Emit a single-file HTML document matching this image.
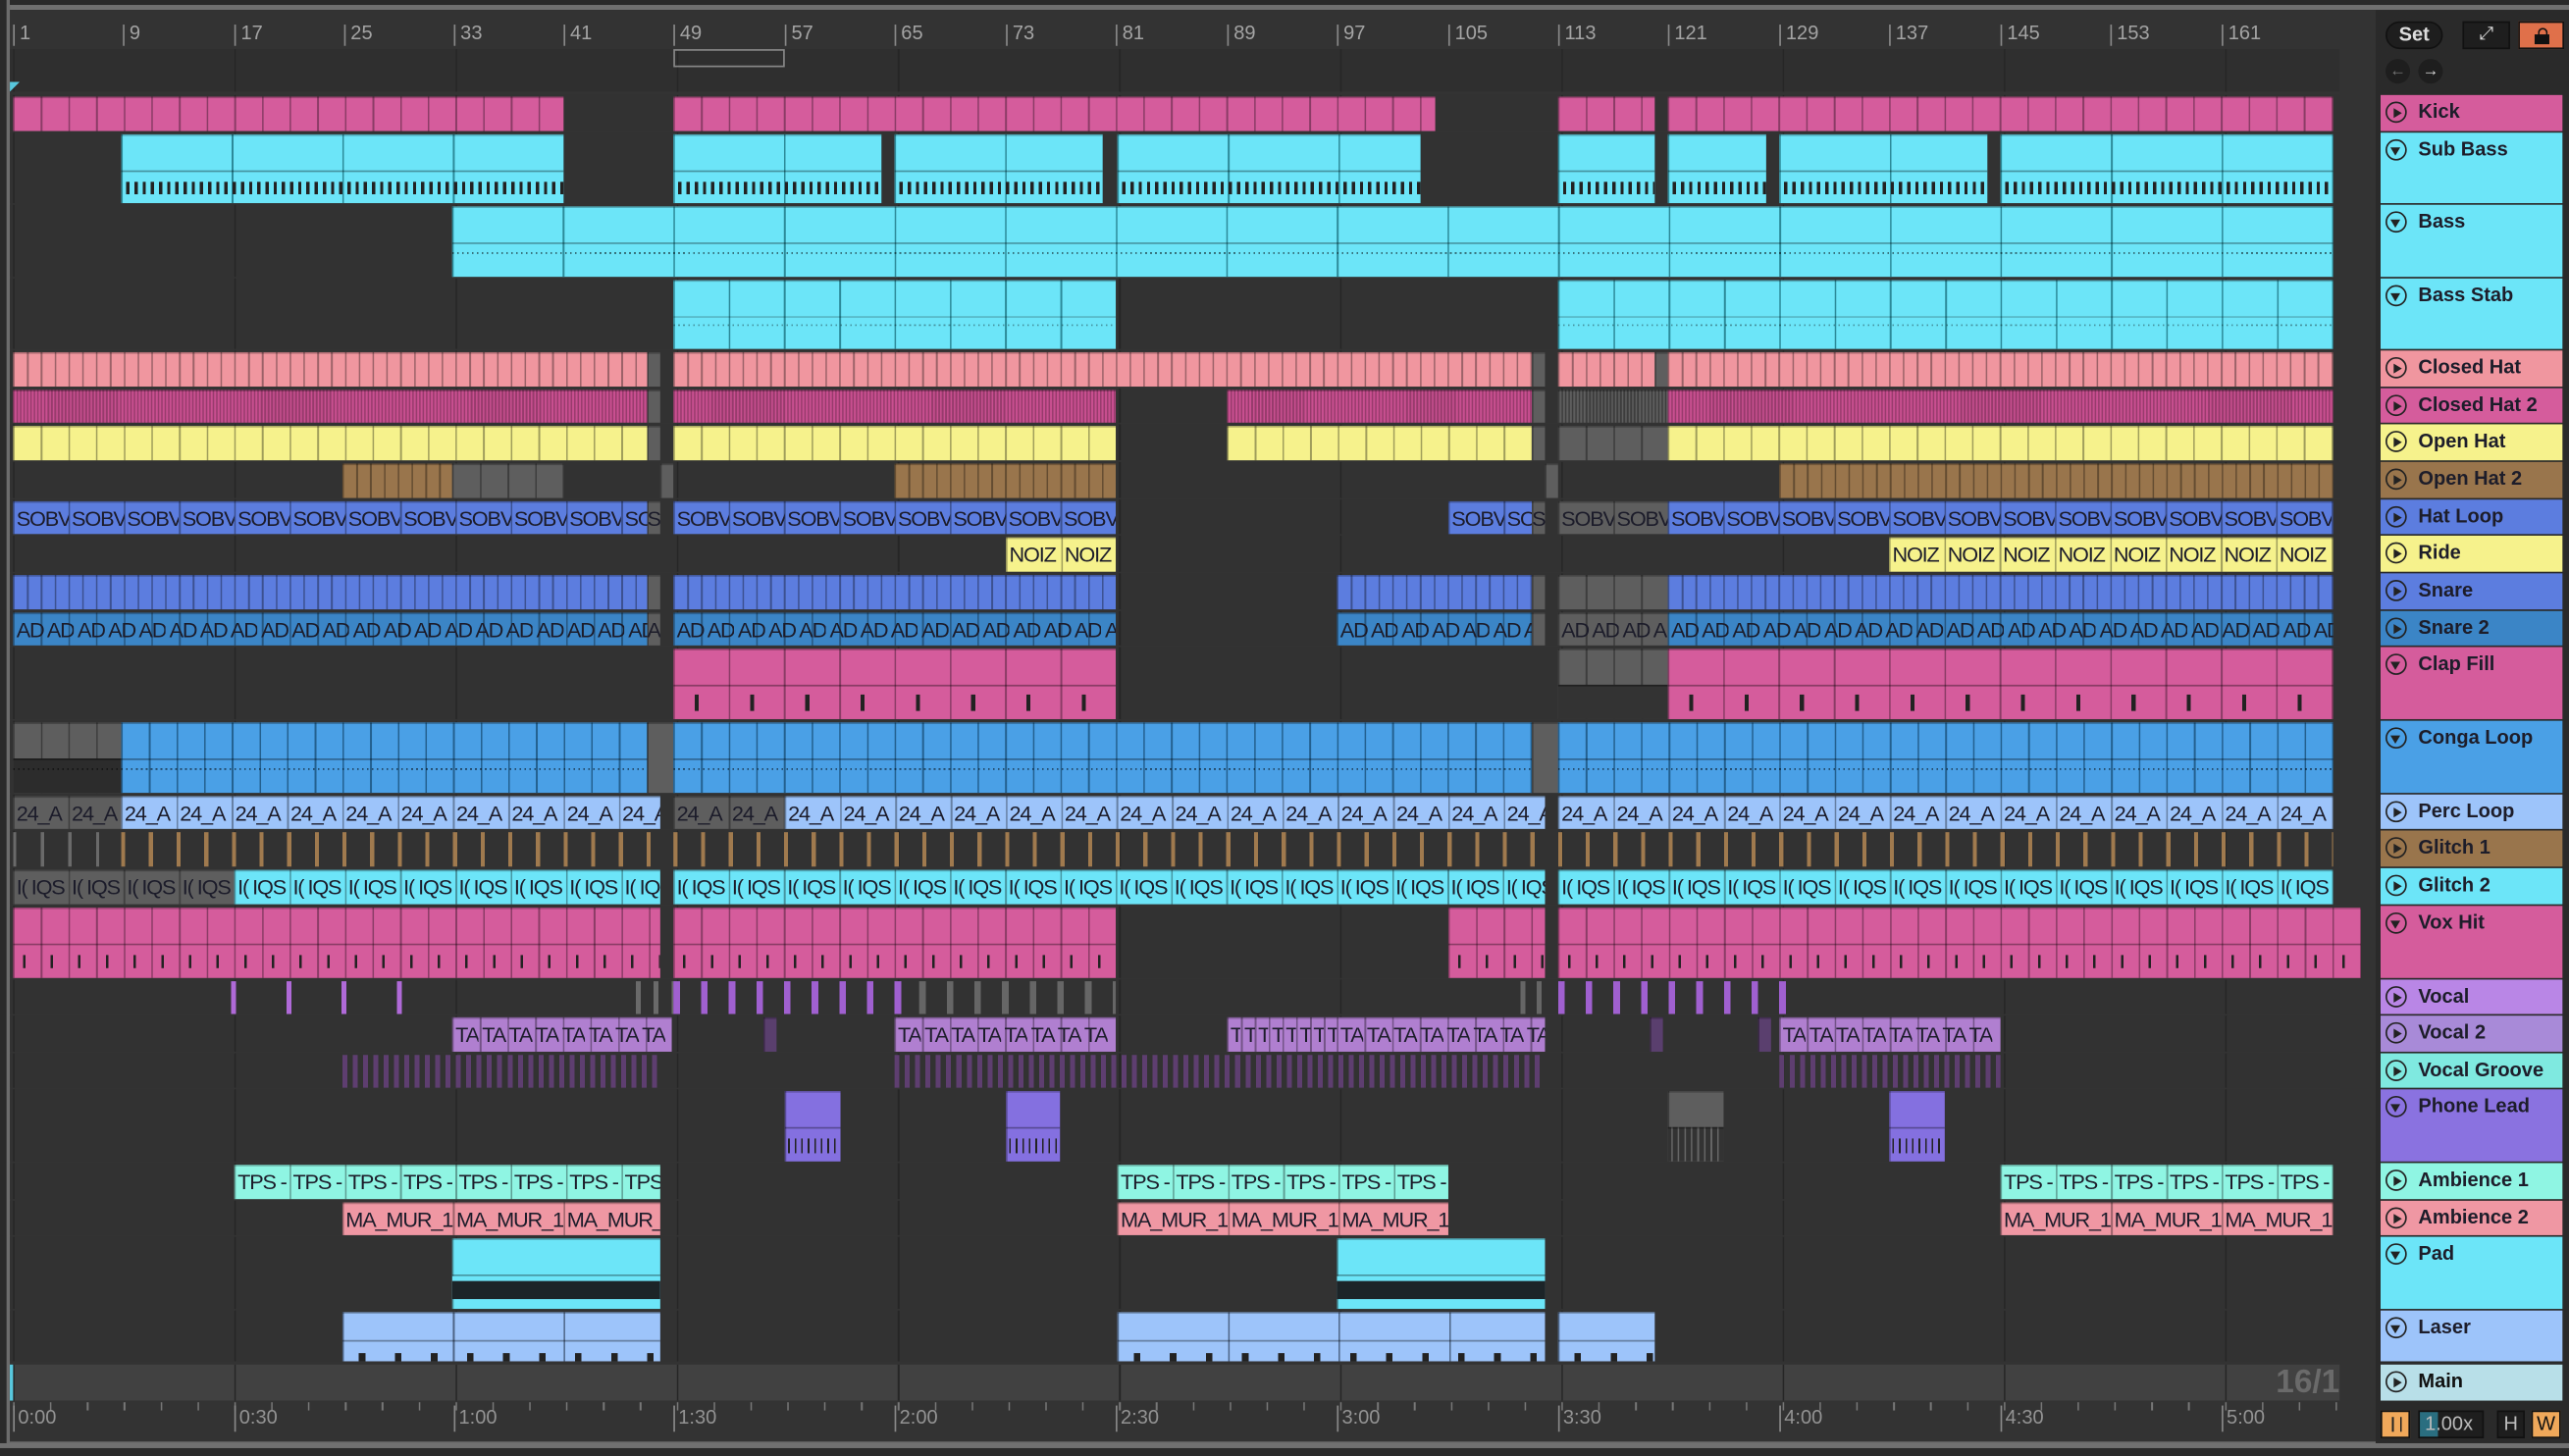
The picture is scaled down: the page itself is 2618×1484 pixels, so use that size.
<!DOCTYPE html>
<html><head><meta charset="utf-8"><style>
*{margin:0;padding:0;box-sizing:border-box}
html,body{width:2618px;height:1484px;overflow:hidden;background:#2a2a2a}
#w{position:absolute;left:0;top:0;width:1568px;height:889px;transform:scale(1.66965);transform-origin:0 0;font-family:"Liberation Sans",sans-serif}
.abs{position:absolute}
.r{position:absolute;left:0;width:1428px;background:#323232;background-image:repeating-linear-gradient(90deg,#262626 0 1px,transparent 1px 135px);background-position:8px 0}
.c{position:absolute;top:1px;bottom:0;background:repeating-linear-gradient(90deg,var(--d,rgba(0,0,0,.35)) 0 1px,transparent 1px var(--s,16.875px)),var(--c);border-top:1px solid rgba(0,0,0,.25);overflow:hidden}
.g{--c:#5e5e5e}
.t{white-space:nowrap;font-size:13px;line-height:20px;color:#1c1c2a;letter-spacing:-.7px}
.t i{display:inline-block;width:var(--s);padding-left:2px;overflow:hidden;font-style:normal;vertical-align:top}
.t i.n{width:9px}.t i.w{width:24.75px}
.lo{position:absolute;left:0;right:0;top:50%;bottom:0;border-top:1px solid rgba(0,0,0,.35)}
.mk{background:repeating-linear-gradient(90deg,transparent 0 3px,#222 3px 5px,transparent 5px var(--s));background-size:100% 40%;background-repeat:repeat-x;background-position:0 55%}
.dots{background:repeating-linear-gradient(90deg,rgba(0,0,0,.6) 0 1px,transparent 1px 3px);background-size:100% 1px;background-repeat:repeat-x;background-position:0 25%}
.h{position:absolute;left:1453px;width:111px;font-weight:bold;font-size:12px;color:#1d1d2a;padding-left:23px;line-height:20px}
.h:before{content:"";position:absolute;left:3px;top:4px;width:11px;height:11px;border:1.3px solid #222;border-radius:50%}
.h:after{content:"";position:absolute;left:8px;top:7.5px;border-left:5px solid #222;border-top:3.5px solid transparent;border-bottom:3.5px solid transparent}
.h.v:after{left:6px;top:9px;border-top:5px solid #222;border-left:3.5px solid transparent;border-right:3.5px solid transparent;border-bottom:0}
.rl{position:absolute;top:15px;font-size:12px;color:#a4a4a4;border-left:1px solid #888;padding-left:3px;height:13px;line-height:11px}
.tl{position:absolute;top:858px;font-size:12px;color:#939393;border-left:1px solid #888;padding-left:2px;line-height:14px;height:16px}
</style></head><body><div id="w">
<div class="abs" style="left:0;top:3px;width:1568px;height:3px;background:#707070"></div>
<div class="abs" style="left:4px;top:6px;width:1446px;height:876px;border-left:2px solid #6c6c6c;border-bottom:2px solid #6c6c6c;background:#333"></div>
<div class="abs" style="left:6px;top:30px;width:1422px;height:26px;background:#2f2f2f;background-image:repeating-linear-gradient(90deg,#262626 0 1px,transparent 1px 135px);background-position:2px 0"></div>
<div class="abs" style="left:6px;top:50px;border-left:6px solid #58c8de;border-bottom:6px solid transparent"></div>
<div class="abs" style="left:411px;top:30px;width:68px;height:11px;border:1px solid #888"></div>
<div class="rl" style="left:8px">1</div><div class="rl" style="left:75px">9</div><div class="rl" style="left:143px">17</div><div class="rl" style="left:210px">25</div><div class="rl" style="left:277px">33</div><div class="rl" style="left:344px">41</div><div class="rl" style="left:411px">49</div><div class="rl" style="left:479px">57</div><div class="rl" style="left:546px">65</div><div class="rl" style="left:614px">73</div><div class="rl" style="left:681px">81</div><div class="rl" style="left:749px">89</div><div class="rl" style="left:816px">97</div><div class="rl" style="left:884px">105</div><div class="rl" style="left:951px">113</div><div class="rl" style="left:1018px">121</div><div class="rl" style="left:1086px">129</div><div class="rl" style="left:1153px">137</div><div class="rl" style="left:1221px">145</div><div class="rl" style="left:1288px">153</div><div class="rl" style="left:1356px">161</div>
<div class="abs" style="left:1456px;top:13px;width:35px;height:17px;border-radius:9px;background:#1e1e1e;border:1px solid #111;color:#ddd;font-size:12px;text-align:center;line-height:15px;font-weight:bold">Set</div>
<div class="abs" style="left:1503px;top:13px;width:29px;height:17px;background:#1e1e1e;border:1px solid #111;color:#ddd;font-size:11px;text-align:center;line-height:15px">⤢</div>
<div class="abs" style="left:1537px;top:13px;width:28px;height:17px;background:#e0704a;border:1px solid #111;text-align:center"><div class="abs" style="left:9px;top:7px;width:9px;height:6px;background:#111"></div><div class="abs" style="left:10.5px;top:3px;width:6px;height:6px;border:1.5px solid #111;border-bottom:0;border-radius:3px 3px 0 0"></div></div>
<div class="abs" style="left:1456px;top:36px;width:15px;height:15px;border-radius:50%;background:#1e1e1e;color:#777;font-size:10px;text-align:center;line-height:15px">←</div>
<div class="abs" style="left:1476px;top:36px;width:15px;height:15px;border-radius:50%;background:#1e1e1e;color:#ddd;font-size:10px;text-align:center;line-height:15px">→</div>

<div class="r" style="top:58px;height:22px"><div class="c" style="--c:#d55c9c;left:8px;width:336px"></div><div class="c" style="--c:#d55c9c;left:411px;width:465px"></div><div class="c" style="--c:#d55c9c;left:951px;width:59px"></div><div class="c" style="--c:#d55c9c;left:1018px;width:406px"></div></div>
<div class="r" style="top:81px;height:43px">
<div class="c" style="--c:#6ce5f8;--s:67.5px;--d:#2c8a99;left:74px;width:270px"><div class="lo mk" style="--s:5px"></div></div>
<div class="c" style="--c:#6ce5f8;--s:67.5px;--d:#2c8a99;left:411px;width:127px"><div class="lo mk" style="--s:5px"></div></div>
<div class="c" style="--c:#6ce5f8;--s:67.5px;--d:#2c8a99;left:546px;width:127px"><div class="lo mk" style="--s:5px"></div></div>
<div class="c" style="--c:#6ce5f8;--s:67.5px;--d:#2c8a99;left:682px;width:185px"><div class="lo mk" style="--s:5px"></div></div>
<div class="c" style="--c:#6ce5f8;--s:67.5px;--d:#2c8a99;left:951px;width:59px"><div class="lo mk" style="--s:5px"></div></div>
<div class="c" style="--c:#6ce5f8;--s:67.5px;--d:#2c8a99;left:1018px;width:60px"><div class="lo mk" style="--s:5px"></div></div>
<div class="c" style="--c:#6ce5f8;--s:67.5px;--d:#2c8a99;left:1086px;width:127px"><div class="lo mk" style="--s:5px"></div></div>
<div class="c" style="--c:#6ce5f8;--s:67.5px;--d:#2c8a99;left:1221px;width:203px"><div class="lo mk" style="--s:5px"></div></div></div>
<div class="r" style="top:125px;height:44px"><div class="c" style="--c:#6ce5f8;--s:67.5px;--d:#2c8a99;left:276px;width:1148px"><div class="lo dots"></div></div></div>
<div class="r" style="top:170px;height:43px"><div class="c" style="--c:#6ce5f8;--s:33.75px;--d:#2c8a99;left:411px;width:270px"><div class="lo dots" style="opacity:.6"></div></div><div class="c" style="--c:#6ce5f8;--s:33.75px;--d:#2c8a99;left:951px;width:473px"><div class="lo dots" style="opacity:.6"></div></div></div>
<div class="r" style="top:214px;height:22px"><div class="c" style="--c:#f0969f;--s:8.4375px;left:8px;width:387px"></div><div class="c g" style="left:395px;width:8px"></div><div class="c" style="--c:#f0969f;--s:8.4375px;left:411px;width:524px"></div><div class="c g" style="left:935px;width:8px"></div><div class="c" style="--c:#f0969f;--s:8.4375px;left:951px;width:59px"></div><div class="c g" style="left:1010px;width:8px"></div><div class="c" style="--c:#f0969f;--s:8.4375px;left:1018px;width:406px"></div></div>
<div class="r" style="top:237px;height:21px"><div class="c" style="--c:#c94f90;--s:2.1px;--d:rgba(0,0,0,.25);left:8px;width:387px"></div><div class="c g" style="left:395px;width:8px"></div><div class="c" style="--c:#c94f90;--s:2.1px;--d:rgba(0,0,0,.25);left:411px;width:270px"></div><div class="c" style="--c:#c94f90;--s:2.1px;--d:rgba(0,0,0,.25);left:749px;width:186px"></div><div class="c g" style="left:935px;width:8px"></div><div class="c g" style="--s:2.1px;left:951px;width:67px"></div><div class="c" style="--c:#c94f90;--s:2.1px;--d:rgba(0,0,0,.25);left:1018px;width:406px"></div></div>
<div class="r" style="top:259px;height:22px"><div class="c" style="--c:#f6f28c;left:8px;width:387px"></div><div class="c g" style="left:395px;width:8px"></div><div class="c" style="--c:#f6f28c;left:411px;width:270px"></div><div class="c" style="--c:#f6f28c;left:749px;width:186px"></div><div class="c g" style="left:935px;width:8px"></div><div class="c g" style="left:951px;width:67px"></div><div class="c" style="--c:#f6f28c;left:1018px;width:406px"></div></div>
<div class="r" style="top:282px;height:22px"><div class="c" style="--c:#99754c;--s:8.4375px;left:209px;width:67px"></div><div class="c g" style="left:276px;width:68px"></div><div class="c g" style="left:403px;width:8px"></div><div class="c" style="--c:#99754c;--s:8.4375px;left:546px;width:135px"></div><div class="c g" style="left:943px;width:8px"></div><div class="c" style="--c:#99754c;--s:8.4375px;left:1086px;width:338px"></div></div>
<div class="r" style="top:305px;height:21px">
<div class="c t" style="--c:#5c7ddf;--s:33.75px;left:8px;width:387px"><i>SOBV</i><i>SOBV</i><i>SOBV</i><i>SOBV</i><i>SOBV</i><i>SOBV</i><i>SOBV</i><i>SOBV</i><i>SOBV</i><i>SOBV</i><i>SOBV</i><i>SOBV</i></div><div class="c g t" style="left:395px;width:8px">S</div>
<div class="c t" style="--c:#5c7ddf;--s:33.75px;left:411px;width:270px"><i>SOBV</i><i>SOBV</i><i>SOBV</i><i>SOBV</i><i>SOBV</i><i>SOBV</i><i>SOBV</i><i>SOBV</i></div>
<div class="c t" style="--c:#5c7ddf;--s:33.75px;left:884px;width:51px"><i>SOBV</i><i>SOBV</i></div><div class="c g t" style="left:935px;width:8px">S</div>
<div class="c g t" style="--s:33.75px;left:951px;width:67px"><i>SOBV</i><i>SOBV</i></div>
<div class="c t" style="--c:#5c7ddf;--s:33.75px;left:1018px;width:406px"><i>SOBV</i><i>SOBV</i><i>SOBV</i><i>SOBV</i><i>SOBV</i><i>SOBV</i><i>SOBV</i><i>SOBV</i><i>SOBV</i><i>SOBV</i><i>SOBV</i><i>SOBV</i></div></div>
<div class="r" style="top:327px;height:22px"><div class="c t" style="--c:#f6f28c;--s:33.75px;left:614px;width:67px"><i>NOIZ</i><i>NOIZ</i></div><div class="c t" style="--c:#f6f28c;--s:33.75px;left:1153px;width:271px"><i>NOIZ</i><i>NOIZ</i><i>NOIZ</i><i>NOIZ</i><i>NOIZ</i><i>NOIZ</i><i>NOIZ</i><i>NOIZ</i></div></div>
<div class="r" style="top:350px;height:22px"><div class="c" style="--c:#5c7ddf;--s:8.4375px;left:8px;width:387px"></div><div class="c g" style="left:395px;width:8px"></div><div class="c" style="--c:#5c7ddf;--s:8.4375px;left:411px;width:270px"></div><div class="c" style="--c:#5c7ddf;--s:8.4375px;left:816px;width:119px"></div><div class="c g" style="left:935px;width:8px"></div><div class="c g" style="left:951px;width:67px"></div><div class="c" style="--c:#5c7ddf;--s:8.4375px;left:1018px;width:406px"></div></div>
<div class="r" style="top:373px;height:21px">
<div class="c t" style="--c:#3b85c6;left:8px;width:387px"><i>AD</i><i>AD</i><i>AD</i><i>AD</i><i>AD</i><i>AD</i><i>AD</i><i>AD</i><i>AD</i><i>AD</i><i>AD</i><i>AD</i><i>AD</i><i>AD</i><i>AD</i><i>AD</i><i>AD</i><i>AD</i><i>AD</i><i>AD</i><i>AD</i><i>AD</i><i>AD</i></div><div class="c g t" style="left:395px;width:8px">A</div>
<div class="c t" style="--c:#3b85c6;left:411px;width:270px"><i>AD</i><i>AD</i><i>AD</i><i>AD</i><i>AD</i><i>AD</i><i>AD</i><i>AD</i><i>AD</i><i>AD</i><i>AD</i><i>AD</i><i>AD</i><i>AD</i><i>AD</i><i>AD</i></div>
<div class="c t" style="--c:#3b85c6;left:816px;width:119px"><i>AD</i><i>AD</i><i>AD</i><i>AD</i><i>AD</i><i>AD</i><i>AD</i></div><div class="c g" style="left:935px;width:8px"></div>
<div class="c g t" style="left:951px;width:67px"><i>AD</i><i>AD</i><i>AD</i><i>AD</i></div>
<div class="c t" style="--c:#3b85c6;left:1018px;width:406px"><i>AD</i><i>AD</i><i>AD</i><i>AD</i><i>AD</i><i>AD</i><i>AD</i><i>AD</i><i>AD</i><i>AD</i><i>AD</i><i>AD</i><i>AD</i><i>AD</i><i>AD</i><i>AD</i><i>AD</i><i>AD</i><i>AD</i><i>AD</i><i>AD</i><i>AD</i><i>AD</i><i>AD</i></div></div>
<div class="r" style="top:395px;height:44px"><div class="c" style="--c:#d55c9c;--s:33.75px;left:411px;width:270px"><div class="lo" style="background:repeating-linear-gradient(90deg,transparent 0 13px,#222 13px 15.5px,transparent 15.5px 33.75px);background-size:100% 50%;background-repeat:repeat-x;background-position:0 50%"></div></div>
<div class="c g" style="left:951px;width:67px"><div class="lo" style="background:#333"></div></div>
<div class="c" style="--c:#d55c9c;--s:33.75px;left:1018px;width:406px"><div class="lo" style="background:repeating-linear-gradient(90deg,transparent 0 13px,#222 13px 15.5px,transparent 15.5px 33.75px);background-size:100% 50%;background-repeat:repeat-x;background-position:0 50%"></div></div></div>
<div class="r" style="top:440px;height:44px"><div class="c g" style="left:8px;width:66px"><div class="lo dots" style="background-color:#2c2c2c"></div></div>
<div class="c" style="--c:#4aa0e6;--d:#23608f;left:74px;width:321px"><div class="lo dots"></div></div><div class="c g" style="left:395px;width:16px"></div>
<div class="c" style="--c:#4aa0e6;--d:#23608f;left:411px;width:524px"><div class="lo dots"></div></div><div class="c g" style="left:935px;width:16px"></div>
<div class="c" style="--c:#4aa0e6;--d:#23608f;left:951px;width:473px"><div class="lo dots"></div></div></div>
<div class="r" style="top:485px;height:21px">
<div class="c g t" style="left:8px;width:66px;--s:33.75px"><i>24_A</i><i>24_A</i></div>
<div class="c t" style="--c:#9dc4fa;--s:33.75px;left:74px;width:329px"><i>24_A</i><i>24_A</i><i>24_A</i><i>24_A</i><i>24_A</i><i>24_A</i><i>24_A</i><i>24_A</i><i>24_A</i><i>24_A</i></div>
<div class="c g t" style="--s:33.75px;left:411px;width:68px"><i>24_A</i><i>24_A</i></div>
<div class="c t" style="--c:#9dc4fa;--s:33.75px;left:479px;width:464px"><i>24_A</i><i>24_A</i><i>24_A</i><i>24_A</i><i>24_A</i><i>24_A</i><i>24_A</i><i>24_A</i><i>24_A</i><i>24_A</i><i>24_A</i><i>24_A</i><i>24_A</i><i>24_A</i></div>
<div class="c t" style="--c:#9dc4fa;--s:33.75px;left:951px;width:473px"><i>24_A</i><i>24_A</i><i>24_A</i><i>24_A</i><i>24_A</i><i>24_A</i><i>24_A</i><i>24_A</i><i>24_A</i><i>24_A</i><i>24_A</i><i>24_A</i><i>24_A</i><i>24_A</i></div></div>
<div class="r" style="top:507px;height:22px"><div class="c" style="border:0;background:repeating-linear-gradient(90deg,#6a6a6a 0 2px,transparent 2px 16.875px);left:8px;width:66px"></div><div class="c" style="border:0;background:repeating-linear-gradient(90deg,#a07a4e 0 2.5px,transparent 2.5px 16.875px);left:74px;width:329px"></div><div class="c" style="border:0;background:repeating-linear-gradient(90deg,#a07a4e 0 2.5px,transparent 2.5px 16.875px);left:411px;width:532px"></div><div class="c" style="border:0;background:repeating-linear-gradient(90deg,#a07a4e 0 2.5px,transparent 2.5px 16.875px);left:951px;width:473px"></div></div>
<div class="r" style="top:530px;height:22px">
<div class="c g t" style="--s:33.75px;--d:rgba(0,0,0,.3);left:8px;width:135px"><i class="n">I(</i><i class="w">IQS</i><i class="n">I(</i><i class="w">IQS</i><i class="n">I(</i><i class="w">IQS</i><i class="n">I(</i><i class="w">IQS</i></div>
<div class="c t" style="--c:#6ce5f8;--s:33.75px;left:143px;width:260px"><i class="n">I(</i><i class="w">IQS</i><i class="n">I(</i><i class="w">IQS</i><i class="n">I(</i><i class="w">IQS</i><i class="n">I(</i><i class="w">IQS</i><i class="n">I(</i><i class="w">IQS</i><i class="n">I(</i><i class="w">IQS</i><i class="n">I(</i><i class="w">IQS</i><i class="n">I(</i><i class="w">IQS</i></div>
<div class="c t" style="--c:#6ce5f8;--s:33.75px;left:411px;width:532px"><i class="n">I(</i><i class="w">IQS</i><i class="n">I(</i><i class="w">IQS</i><i class="n">I(</i><i class="w">IQS</i><i class="n">I(</i><i class="w">IQS</i><i class="n">I(</i><i class="w">IQS</i><i class="n">I(</i><i class="w">IQS</i><i class="n">I(</i><i class="w">IQS</i><i class="n">I(</i><i class="w">IQS</i><i class="n">I(</i><i class="w">IQS</i><i class="n">I(</i><i class="w">IQS</i><i class="n">I(</i><i class="w">IQS</i><i class="n">I(</i><i class="w">IQS</i><i class="n">I(</i><i class="w">IQS</i><i class="n">I(</i><i class="w">IQS</i><i class="n">I(</i><i class="w">IQS</i><i class="n">I(</i><i class="w">IQS</i></div>
<div class="c t" style="--c:#6ce5f8;--s:33.75px;left:951px;width:473px"><i class="n">I(</i><i class="w">IQS</i><i class="n">I(</i><i class="w">IQS</i><i class="n">I(</i><i class="w">IQS</i><i class="n">I(</i><i class="w">IQS</i><i class="n">I(</i><i class="w">IQS</i><i class="n">I(</i><i class="w">IQS</i><i class="n">I(</i><i class="w">IQS</i><i class="n">I(</i><i class="w">IQS</i><i class="n">I(</i><i class="w">IQS</i><i class="n">I(</i><i class="w">IQS</i><i class="n">I(</i><i class="w">IQS</i><i class="n">I(</i><i class="w">IQS</i><i class="n">I(</i><i class="w">IQS</i><i class="n">I(</i><i class="w">IQS</i></div></div>
<div class="r" style="top:553px;height:44px">
<div class="c" style="--c:#d55c9c;left:8px;width:395px"><div class="lo" style="background:repeating-linear-gradient(90deg,transparent 0 6px,#222 6px 7.5px,transparent 7.5px 16.875px);background-size:100% 40%;background-repeat:repeat-x;background-position:0 50%"></div></div>
<div class="c" style="--c:#d55c9c;left:411px;width:270px"><div class="lo" style="background:repeating-linear-gradient(90deg,transparent 0 6px,#222 6px 7.5px,transparent 7.5px 16.875px);background-size:100% 40%;background-repeat:repeat-x;background-position:0 50%"></div></div>
<div class="c" style="--c:#d55c9c;left:884px;width:59px"><div class="lo" style="background:repeating-linear-gradient(90deg,transparent 0 6px,#222 6px 7.5px,transparent 7.5px 16.875px);background-size:100% 40%;background-repeat:repeat-x;background-position:0 50%"></div></div>
<div class="c" style="--c:#d55c9c;left:951px;width:490px"><div class="lo" style="background:repeating-linear-gradient(90deg,transparent 0 6px,#222 6px 7.5px,transparent 7.5px 16.875px);background-size:100% 40%;background-repeat:repeat-x;background-position:0 50%"></div></div></div>
<div class="r" style="top:598px;height:21px"><div class="c" style="border:0;background:repeating-linear-gradient(90deg,#b06ad8 0 3px,transparent 3px 33.75px);left:141px;width:130px"></div><div class="c" style="border:0;background:repeating-linear-gradient(90deg,#6a6a6a 0 3px,transparent 3px 11px);left:388px;width:23px"></div><div class="c" style="border:0;background:repeating-linear-gradient(90deg,#a060d0 0 4px,transparent 4px 16.875px);left:411px;width:150px"></div><div class="c" style="border:0;background:repeating-linear-gradient(90deg,#666 0 4px,transparent 4px 16.875px);left:561px;width:120px"></div><div class="c" style="border:0;background:repeating-linear-gradient(90deg,#666 0 3px,transparent 3px 10px);left:928px;width:20px"></div><div class="c" style="border:0;background:repeating-linear-gradient(90deg,#a060d0 0 4px,transparent 4px 16.875px);left:951px;width:140px"></div></div>
<div class="r" style="top:620px;height:22px">
<div class="c t" style="--c:#b07fd0;left:276px;width:134px"><i>TA</i><i>TA</i><i>TA</i><i>TA</i><i>TA</i><i>TA</i><i>TA</i><i>TA</i></div>
<div class="c" style="--c:#5a3f6e;left:466px;width:8px"></div>
<div class="c t" style="--c:#b07fd0;left:546px;width:135px"><i>TA</i><i>TA</i><i>TA</i><i>TA</i><i>TA</i><i>TA</i><i>TA</i><i>TA</i></div>
<div class="c t" style="--c:#b07fd0;--s:8.4375px;left:749px;width:67px"><i>T</i><i>T</i><i>T</i><i>T</i><i>T</i><i>T</i><i>T</i><i>T</i></div>
<div class="c t" style="--c:#b07fd0;left:816px;width:127px"><i>TA</i><i>TA</i><i>TA</i><i>TA</i><i>TA</i><i>TA</i><i>TA</i><i>TA</i></div>
<div class="c" style="--c:#5a3f6e;left:1007px;width:8px"></div><div class="c" style="--c:#5a3f6e;left:1073px;width:8px"></div>
<div class="c t" style="--c:#b07fd0;left:1086px;width:135px"><i>TA</i><i>TA</i><i>TA</i><i>TA</i><i>TA</i><i>TA</i><i>TA</i><i>TA</i></div></div>
<div class="r" style="top:643px;height:21px"><div class="c" style="border:0;background:repeating-linear-gradient(90deg,#5e3e70 0 3px,transparent 3px 6.3px);left:209px;width:194px"></div><div class="c" style="border:0;background:repeating-linear-gradient(90deg,#5e3e70 0 3px,transparent 3px 6.3px);left:546px;width:397px"></div><div class="c" style="border:0;background:repeating-linear-gradient(90deg,#5e3e70 0 3px,transparent 3px 6.3px);left:1086px;width:135px"></div></div>
<div class="r" style="top:665px;height:44px"><div class="c" style="--c:#8470e0;--s:40px;left:479px;width:34px"><div class="lo" style="background:repeating-linear-gradient(90deg,transparent 0 2px,#222 2px 3px,transparent 3px 4px);background-size:100% 45%;background-repeat:repeat-x;background-position:0 50%"></div></div><div class="c" style="--c:#8470e0;--s:40px;left:614px;width:33px"><div class="lo" style="background:repeating-linear-gradient(90deg,transparent 0 2px,#222 2px 3px,transparent 3px 4px);background-size:100% 45%;background-repeat:repeat-x;background-position:0 50%"></div></div><div class="c g" style="--s:40px;left:1018px;width:34px"><div class="lo" style="background:#333 repeating-linear-gradient(90deg,transparent 0 2px,#666 2px 3px,transparent 3px 4px);"></div></div><div class="c" style="--c:#8470e0;--s:40px;left:1153px;width:34px"><div class="lo" style="background:repeating-linear-gradient(90deg,transparent 0 2px,#222 2px 3px,transparent 3px 4px);background-size:100% 45%;background-repeat:repeat-x;background-position:0 50%"></div></div></div>
<div class="r" style="top:710px;height:22px">
<div class="c t" style="--c:#8ff5e3;--s:33.75px;left:143px;width:260px"><i>TPS -</i><i>TPS -</i><i>TPS -</i><i>TPS -</i><i>TPS -</i><i>TPS -</i><i>TPS -</i><i>TPS -</i></div>
<div class="c t" style="--c:#8ff5e3;--s:33.75px;left:682px;width:202px"><i>TPS -</i><i>TPS -</i><i>TPS -</i><i>TPS -</i><i>TPS -</i><i>TPS -</i></div>
<div class="c t" style="--c:#8ff5e3;--s:33.75px;left:1221px;width:203px"><i>TPS -</i><i>TPS -</i><i>TPS -</i><i>TPS -</i><i>TPS -</i><i>TPS -</i></div></div>
<div class="r" style="top:733px;height:21px">
<div class="c t" style="--c:#ef97a3;--s:67.5px;left:209px;width:194px"><i>MA_MUR_1</i><i>MA_MUR_1</i><i>MA_MUR_1</i></div>
<div class="c t" style="--c:#ef97a3;--s:67.5px;left:682px;width:202px"><i>MA_MUR_1</i><i>MA_MUR_1</i><i>MA_MUR_1</i></div>
<div class="c t" style="--c:#ef97a3;--s:67.5px;left:1221px;width:203px"><i>MA_MUR_1</i><i>MA_MUR_1</i><i>MA_MUR_1</i></div></div>
<div class="r" style="top:755px;height:44px"><div class="c" style="--c:#6ce5f8;--s:200px;left:276px;width:127px"><div class="lo" style="background:linear-gradient(#6ce5f8 0 3px,#1c2428 3px 14px,transparent 14px)"></div></div><div class="c" style="--c:#6ce5f8;--s:200px;left:816px;width:127px"><div class="lo" style="background:linear-gradient(#6ce5f8 0 3px,#1c2428 3px 14px,transparent 14px)"></div></div></div>
<div class="r" style="top:800px;height:31px"><div class="c" style="--c:#9dc4fa;--s:67.5px;--d:#4d6485;left:209px;width:194px"><div class="lo" style="top:55%;background:repeating-linear-gradient(90deg,transparent 0 10px,#222 10px 14px,transparent 14px 22px);background-size:100% 45%;background-repeat:repeat-x;background-position:0 100%"></div></div><div class="c" style="--c:#9dc4fa;--s:67.5px;--d:#4d6485;left:682px;width:261px"><div class="lo" style="top:55%;background:repeating-linear-gradient(90deg,transparent 0 10px,#222 10px 14px,transparent 14px 22px);background-size:100% 45%;background-repeat:repeat-x;background-position:0 100%"></div></div><div class="c" style="--c:#9dc4fa;--s:67.5px;--d:#4d6485;left:951px;width:59px"><div class="lo" style="top:55%;background:repeating-linear-gradient(90deg,transparent 0 10px,#222 10px 14px,transparent 14px 22px);background-size:100% 45%;background-repeat:repeat-x;background-position:0 100%"></div></div></div>
<div class="r" style="top:833px;height:22px;background-color:#414141"><div class="abs" style="right:0;top:0;font-size:20px;font-weight:bold;color:#6a6a6a;line-height:22px">16/1</div></div>
<div class="abs" style="left:0;top:0;width:6px;height:882px;background:#2a2a2a;border-right:2px solid #6c6c6c"></div>
<div class="abs" style="left:6px;top:833px;width:2px;height:22px;background:#58c8de"></div>
<div class="abs" style="left:6px;top:856px;width:1422px;height:5px;background:repeating-linear-gradient(90deg,#777 0 1px,transparent 1px 22.5px);background-position:2px 0"></div>
<div class="tl" style="left:8px">0:00</div><div class="tl" style="left:143px">0:30</div><div class="tl" style="left:277px">1:00</div><div class="tl" style="left:411px">1:30</div><div class="tl" style="left:546px">2:00</div><div class="tl" style="left:681px">2:30</div><div class="tl" style="left:816px">3:00</div><div class="tl" style="left:951px">3:30</div><div class="tl" style="left:1086px">4:00</div><div class="tl" style="left:1221px">4:30</div><div class="tl" style="left:1356px">5:00</div>
<div class="abs" style="left:0;top:881px;width:1568px;height:3px;background:#707070"></div>
<div class="h" style="top:58px;height:22px;background:#d55c9c">Kick</div>
<div class="h v" style="top:81px;height:43px;background:#6ce5f8">Sub Bass</div>
<div class="h v" style="top:125px;height:44px;background:#6ce5f8">Bass</div>
<div class="h v" style="top:170px;height:43px;background:#6ce5f8">Bass Stab</div>
<div class="h" style="top:214px;height:22px;background:#f0969f">Closed Hat</div>
<div class="h" style="top:237px;height:21px;background:#d55c9c">Closed Hat 2</div>
<div class="h" style="top:259px;height:22px;background:#f6f28c">Open Hat</div>
<div class="h" style="top:282px;height:22px;background:#99754c">Open Hat 2</div>
<div class="h" style="top:305px;height:21px;background:#5c7ddf">Hat Loop</div>
<div class="h" style="top:327px;height:22px;background:#f6f28c">Ride</div>
<div class="h" style="top:350px;height:22px;background:#5c7ddf">Snare</div>
<div class="h" style="top:373px;height:21px;background:#3b85c6">Snare 2</div>
<div class="h v" style="top:395px;height:44px;background:#d55c9c">Clap Fill</div>
<div class="h v" style="top:440px;height:44px;background:#4aa0e6">Conga Loop</div>
<div class="h" style="top:485px;height:21px;background:#9dc4fa">Perc Loop</div>
<div class="h" style="top:507px;height:22px;background:#99754c">Glitch 1</div>
<div class="h" style="top:530px;height:22px;background:#6ce5f8">Glitch 2</div>
<div class="h v" style="top:553px;height:44px;background:#d55c9c">Vox Hit</div>
<div class="h" style="top:598px;height:21px;background:#b986e6">Vocal</div>
<div class="h" style="top:620px;height:22px;background:#a88ad8">Vocal 2</div>
<div class="h" style="top:643px;height:21px;background:#7fe9e0">Vocal Groove</div>
<div class="h v" style="top:665px;height:44px;background:#8a72e0">Phone Lead</div>
<div class="h" style="top:710px;height:22px;background:#8ff5e3">Ambience 1</div>
<div class="h" style="top:733px;height:21px;background:#ef97a3">Ambience 2</div>
<div class="h v" style="top:755px;height:44px;background:#6ce5f8">Pad</div>
<div class="h v" style="top:800px;height:31px;background:#9dc4fa">Laser</div>
<div class="h" style="top:833px;height:22px;background:#b8dfe8;color:#111">Main</div>
<div class="abs" style="left:1453px;top:861px;width:18px;height:17px;background:#f0a85a;border:1px solid #111;background-image:repeating-linear-gradient(90deg,transparent 0 3px,#222 3px 4px,transparent 4px 5px);background-size:11px 9px;background-position:3px 3px;background-repeat:no-repeat"></div>
<div class="abs" style="left:1476px;top:861px;width:40px;height:17px;background:#1e1e1e;border:1px solid #111;color:#bbb;font-size:12px;line-height:15px;padding-left:3px"><span style="position:absolute;left:0;top:0;width:11px;height:15px;background:#2a6e80"></span><span style="position:relative">1.00x</span></div>
<div class="abs" style="left:1524px;top:861px;width:17px;height:17px;background:#1e1e1e;border:1px solid #111;color:#bbb;font-size:12px;text-align:center;line-height:15px">H</div>
<div class="abs" style="left:1545px;top:861px;width:18px;height:17px;background:#f0a85a;border:1px solid #111;color:#111;font-size:12px;text-align:center;line-height:15px">W</div>
</div></body></html>
